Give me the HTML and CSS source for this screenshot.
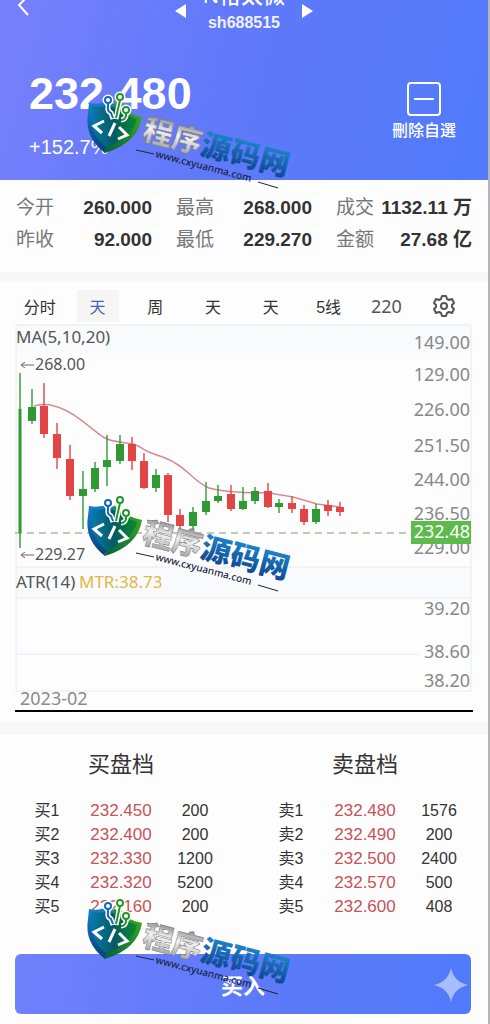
FILE: index.html
```
<!DOCTYPE html>
<html lang="zh-CN">

<head>
  <meta charset="UTF-8">
  <meta name="viewport" content="width=device-width, initial-scale=1.0">
  <title>N裕太微 sh688515</title>
  <link rel="stylesheet" href="styles.css">
</head>

<body>
  <div class="app">
    <header class="header">
      <div class="nav">
        <button class="icon-btn" aria-label="返回">
          <svg width="14" height="24" viewBox="0 0 14 24" fill="none" stroke="#fff" stroke-width="2"><path d="M11 2L2 11l9 10" /></svg>
        </button>
        <div class="stock">
          <button class="icon-btn" aria-label="上一个">
            <svg width="12" height="14" viewBox="0 0 12 14" fill="#fff"><path d="M11 0v14L0 7z" /></svg>
          </button>
          <div class="stock-title">
            <h1>N裕太微</h1>
            <p>sh688515</p>
          </div>
          <button class="icon-btn" aria-label="下一个">
            <svg width="12" height="14" viewBox="0 0 12 14" fill="#fff"><path d="M1 0v14l11-7z" /></svg>
          </button>
        </div>
      </div>

      <div class="quote">
        <div>
          <div class="price">232.480</div>
          <div class="change">+152.7%</div>
        </div>
        <button class="favorite">
          <svg width="36" height="36" viewBox="0 0 36 36" fill="none" stroke="#fff" stroke-width="2"><rect x="2" y="2" width="32" height="32" rx="3" /><path d="M8 18h20" /></svg>
          刪除自選
        </button>
      </div>
    </header>

    <dl class="stats">
      <div><dt>今开</dt><dd>260.000</dd></div>
      <div><dt>最高</dt><dd>268.000</dd></div>
      <div><dt>成交</dt><dd>1132.11 万</dd></div>
      <div><dt>昨收</dt><dd>92.000</dd></div>
      <div><dt>最低</dt><dd>229.270</dd></div>
      <div><dt>金额</dt><dd>27.68 亿</dd></div>
    </dl>

    <section class="chart">
      <div class="tabs">
        <button>分时</button>
        <button class="active">天</button>
        <button>周</button>
        <button>天</button>
        <button>天</button>
        <button>5线</button>
        <button class="num">220</button>
        <button aria-label="设置">
          <svg width="22" height="22" viewBox="0 0 22 22" fill="none" stroke="#555" stroke-width="2" stroke-linejoin="round"><path d="M9 1h4l1 3 2 1 3-1 2 4-2 2v2l2 2-2 4-3-1-2 1-1 3H9l-1-3-2-1-3 1-2-4 2-2v-2L1 8l2-4 3 1 2-1z" /><circle cx="11" cy="11" r="3" /></svg>
        </button>
      </div>

      <svg class="kline" viewBox="0 0 458 392">
        <rect class="band" x="1" y="3" width="455" height="28" />
        <rect class="band" x="1" y="245" width="455" height="31" />
        <path class="grid" d="M1 369V3h455v366zM1 245h455M1 276h455M1 332h403" />
        <path class="last-line" d="M0 211h397" />
        <path class="ma" d="M19 84C27 82 33 82 39 84C57 88 75 106 88 115C98 121 110 120 118 122C126 124 128 128 134 130C145 135 151 135 160 141C173 148 181 161 194 166C208 170 224 170 238 171C248 171 254 170 260 172L278 175L302 182L325 185" />
        <g id="candles"></g>

        <text class="label" x="1" y="21">MA(5,10,20)</text>
        <path class="arrow" d="M19 43H6M10 40l-4 3 4 3M19 233H6M10 230l-4 3 4 3" />
        <text class="mark" x="20" y="48">268.00</text>
        <text class="mark" x="20" y="238">229.27</text>

        <g class="axis">
          <text x="455" y="27">149.00</text>
          <text x="455" y="59">129.00</text>
          <text x="455" y="94">226.00</text>
          <text x="455" y="130">251.50</text>
          <text x="455" y="164">244.00</text>
          <text x="455" y="198">236.50</text>
          <text x="455" y="232">229.00</text>
          <rect x="396" y="199" width="60" height="23" />
          <text class="last" x="455" y="216">232.48</text>
          <text x="455" y="293">39.20</text>
          <text x="455" y="336">38.60</text>
          <text x="455" y="365">38.20</text>
        </g>

        <text class="label" x="1" y="266">ATR(14)</text>
        <text class="label mtr" x="64" y="266">MTR:38.73</text>
        <text class="date" x="5" y="383">2023-02</text>
        <rect x="0" y="388" width="458" height="2" />
      </svg>
    </section>

    <section class="book">
      <div>
        <h2>买盘档</h2>
        <table>
          <tr><th>买1</th><td class="red">232.450</td><td>200</td></tr>
          <tr><th>买2</th><td class="red">232.400</td><td>200</td></tr>
          <tr><th>买3</th><td class="red">232.330</td><td>1200</td></tr>
          <tr><th>买4</th><td class="red">232.320</td><td>5200</td></tr>
          <tr><th>买5</th><td class="red">232.160</td><td>200</td></tr>
        </table>
      </div>
      <div>
        <h2>卖盘档</h2>
        <table>
          <tr><th>卖1</th><td class="red">232.480</td><td>1576</td></tr>
          <tr><th>卖2</th><td class="red">232.490</td><td>200</td></tr>
          <tr><th>卖3</th><td class="red">232.500</td><td>2400</td></tr>
          <tr><th>卖4</th><td class="red">232.570</td><td>500</td></tr>
          <tr><th>卖5</th><td class="red">232.600</td><td>408</td></tr>
        </table>
      </div>
    </section>

    <div class="footer">
      <button class="buy">买入</button>
      <svg class="sparkle" width="34" height="34" viewBox="0 0 34 34"><path d="M17 0Q20 14 34 17Q20 20 17 34Q14 20 0 17Q14 14 17 0z" /></svg>
    </div>

    <svg class="watermark first" viewBox="0 0 220 110">
      <defs>
        <linearGradient id="silver" x1="0" y1="0" x2="0" y2="1">
          <stop offset=".2" stop-color="#8a8a8a" />
          <stop offset=".5" stop-color="#f4f4f4" />
          <stop offset="1" stop-color="#888" />
        </linearGradient>
        <linearGradient id="blue" x1="0" y1="0" x2="0" y2="1">
          <stop offset=".2" stop-color="#1d86cb" />
          <stop offset="1" stop-color="#0b3a86" />
        </linearGradient>
        <linearGradient id="shieldBlue" x1="0" y1="0" x2="0" y2="1">
          <stop offset="0" stop-color="#1583d0" />
          <stop offset="1" stop-color="#073f78" />
        </linearGradient>
        <linearGradient id="shieldGreen" x1="1" y1="0" x2="0" y2="1">
          <stop offset="0" stop-color="#42b01e" />
          <stop offset="1" stop-color="#05603f" />
        </linearGradient>
        <linearGradient id="inner" x1="0" y1="0" x2="1" y2="0">
          <stop offset="0" stop-color="#0879ae" />
          <stop offset=".5" stop-color="#045a63" />
          <stop offset="1" stop-color="#0b8c2c" />
        </linearGradient>
        <symbol id="logo" viewBox="0 0 220 110">
          <path fill="url(#shieldBlue)" d="M9 18Q20 20 28 16L36 20L25 68Q4 52 8 28z" />
          <path fill="url(#shieldGreen)" d="M34 17Q46 29 62 32Q58 58 25 68z" />
          <path fill="url(#inner)" d="M12 21Q21 23 28 20L40 25Q47 31 57 34Q52 54 26 62Q8 48 12 21z" />
          <g fill="#fff" stroke="#fff" stroke-width="5">
            <path fill="none" d="M28 17v5q-1 4 3 6l2 6M40 15l-4 19M46 27v4q-1 4-5 4" />
            <circle cx="28" cy="15" r="3" />
            <circle cx="40" cy="12" r="3" />
            <circle cx="46" cy="25" r="3" />
          </g>
          <g fill="#fff" stroke="#23962a" stroke-width="2">
            <path fill="none" stroke="#1468b5" d="M28 17v5q-1 4 3 6l2 5" />
            <path fill="none" d="M40 15l-4 18M46 27v4q-1 4-5 4" />
            <circle cx="28" cy="15" r="3" stroke="#1468b5" />
            <circle cx="40" cy="12" r="3" />
            <circle cx="46" cy="25" r="3" />
          </g>
          <path fill="none" stroke="#fff" stroke-width="3" d="M24 36l-10 5 8 7M35 38l-6 13M39 42l8 8-9 4" />
          <g transform="translate(61 54) rotate(14.5)">
            <text class="wm-name silver" x="0" y="0">程序</text>
            <text class="wm-name blue" x="60" y="0">源码网</text>
            <text class="wm-url" x="18" y="14">www.cxyuanma.com</text>
          </g>
          <path fill="none" stroke="#223" stroke-width="1" d="M56 65l18 4M178 97l20 6" />
        </symbol>
      </defs>
      <use href="#logo" />
    </svg>
    <svg class="watermark second" viewBox="0 0 220 110"><use href="#logo" /></svg>
    <svg class="watermark third" viewBox="0 0 220 110"><use href="#logo" /></svg>
  </div>

  <script>
    // x, high, body top, body bottom, low, direction
    const candles = [
      [5, 51, 87, 211, 226, 'up'],
      [17, 67, 85, 99, 102, 'up'],
      [29, 61, 84, 112, 116, 'down'],
      [42, 101, 112, 136, 147, 'down'],
      [55, 123, 137, 174, 178, 'down'],
      [68, 149, 167, 174, 207, 'up'],
      [80, 140, 146, 167, 170, 'up'],
      [92, 113, 138, 145, 164, 'up'],
      [105, 113, 122, 139, 142, 'up'],
      [117, 115, 122, 139, 148, 'down'],
      [129, 131, 139, 166, 167, 'down'],
      [141, 147, 153, 166, 170, 'up'],
      [153, 151, 153, 193, 200, 'down'],
      [165, 187, 193, 204, 210, 'down'],
      [178, 185, 190, 204, 207, 'up'],
      [191, 160, 179, 190, 193, 'up'],
      [203, 163, 174, 179, 181, 'up'],
      [216, 163, 172, 187, 189, 'down'],
      [228, 165, 179, 187, 188, 'up'],
      [240, 165, 169, 179, 182, 'up'],
      [253, 161, 169, 185, 186, 'down'],
      [264, 177, 181, 185, 191, 'up'],
      [277, 174, 181, 187, 191, 'down'],
      [289, 183, 187, 200, 203, 'down'],
      [301, 182, 187, 200, 202, 'up'],
      [313, 178, 183, 189, 194, 'down'],
      [325, 180, 185, 190, 194, 'down']
    ];

    document.getElementById('candles').innerHTML = candles.map(([x, high, top, bottom, low, dir], i) => {
      const w = i === 0 ? 3 : 8;
      return `<g class="${dir}"><rect class="wick" x="${x - 1}" y="${high}" width="2" height="${low - high}" />` +
        `<rect x="${x - w / 2}" y="${top}" width="${w}" height="${bottom - top}" /></g>`;
    }).join('');
  </script>
</body>

</html>
```
FILE: styles.css
```
body {
  margin: 0;
  background-color: #fdfdfd;
  font-family: "Liberation Sans", "Noto Sans CJK SC", sans-serif;
  color: #333;
}

.app {
  position: relative;
  overflow: hidden;
  min-height: 100vh;
  box-sizing: border-box;
  border-right: 2px solid #b4b4b8;
}

h1,
h2,
p,
dl,
dd {
  margin: 0;
}

button {
  padding: 0;
  border: none;
  background: none;
  font-family: inherit;
  color: inherit;
  cursor: pointer;
}

.header {
  height: 180px;
  overflow: hidden;
  background: linear-gradient(105deg, #7880fb, #6079fa 45%, #507bfb);
  color: #fff;
}

.nav {
  display: grid;
  grid-template-columns: 1fr auto 1fr;
  padding: 0 17px;
}

.icon-btn {
  display: flex;
  align-items: center;
  height: 22px;
}

.nav > .icon-btn {
  height: 12px;
}

.stock {
  display: flex;
  gap: 16px;
}

.stock-title {
  margin-top: -20px;
  text-align: center;
}

.stock-title h1 {
  font-size: 22px;
  line-height: 32px;
  font-weight: 500;
}

.stock-title p {
  font-size: 16px;
  line-height: 22px;
  font-weight: bold;
  opacity: 0.9;
}

.quote {
  display: flex;
  justify-content: space-between;
  padding: 34px 32px 0 29px;
}

.price {
  font-size: 45px;
  line-height: 52px;
  font-weight: bold;
}

.change {
  margin-top: 15px;
  font-size: 20px;
  line-height: 24px;
}

.favorite {
  display: flex;
  flex-direction: column;
  align-items: center;
  align-self: flex-start;
  margin-top: 13px;
  font-family: "Noto Sans CJK TC", sans-serif;
  font-size: 16px;
  line-height: 24px;
  font-weight: 500;
}

.stats {
  display: grid;
  grid-template-columns: repeat(3, 1fr);
  column-gap: 24px;
  padding: 12px 16px 16px;
  border-bottom: 10px solid #f7f7f7;
}

.stats div {
  display: flex;
  justify-content: space-between;
  line-height: 32px;
  font-size: 19px;
  white-space: nowrap;
}

.stats dt {
  color: #777;
}

.stats dd {
  font-weight: bold;
}

.chart {
  padding: 0 15px 8px;
  border-bottom: 13px solid #f7f7f7;
}

.tabs {
  display: grid;
  grid-template-columns: repeat(8, 1fr);
  height: 40px;
  margin-left: -4px;
  padding-top: 8px;
  box-sizing: border-box;
}

.tabs button {
  display: flex;
  align-items: center;
  justify-content: center;
  margin: 0 8px;
  font-size: 16px;
  white-space: nowrap;
}

.tabs .active {
  background-color: #f6f5f4;
  color: #3d6cae;
}

.tabs .num {
  font-family: "Noto Sans", sans-serif;
  font-size: 18px;
  color: #555;
}

.kline {
  display: block;
  width: 100%;
  font-family: "Noto Sans", sans-serif;
}

.kline .band {
  fill: #f8fafc;
}

.kline .grid {
  fill: none;
  stroke: #e6ecf0;
}

.kline .last-line {
  stroke: #7d9c80;
  stroke-dasharray: 7 5;
}

.kline .ma {
  fill: none;
  stroke: #d98a90;
  stroke-width: 1.5;
}

.kline .up {
  fill: #2f9a33;
}

.kline .down {
  fill: #e24545;
}

.kline .wick {
  opacity: 0.7;
}

.kline .arrow {
  fill: none;
  stroke: #666;
}

.kline .label {
  font-size: 17px;
  fill: #555;
}

.kline .mtr {
  fill: #e0b847;
}

.kline .mark {
  font-size: 16px;
  fill: #555;
}

.kline .date {
  font-size: 18px;
  fill: #8a8a8a;
}

.kline .axis {
  font-size: 18px;
  text-anchor: end;
  fill: #888;
}

.kline .axis rect {
  fill: #5dbb4c;
}

.kline .axis .last {
  fill: #fff;
}

.book {
  display: grid;
  grid-template-columns: 1fr 1fr;
  padding: 14px 0 35px;
}

.book h2 {
  font-size: 22px;
  line-height: 32px;
  font-weight: normal;
  text-align: center;
}

.book > div {
  padding: 0 12px 0 10px;
}

.book table {
  width: 100%;
  margin-top: 18px;
  table-layout: fixed;
  border-collapse: collapse;
}

.book th,
.book td {
  height: 24px;
  padding: 0;
  font-size: 16px;
  line-height: 24px;
  font-weight: normal;
  text-align: center;
}

.book .red {
  font-size: 17px;
  color: #c65358;
}

.footer {
  position: relative;
  padding: 0 17px 10px 15px;
}

.buy {
  width: 100%;
  height: 60px;
  border-radius: 6px;
  background: linear-gradient(100deg, #7180fb, #5e7afa 50%, #507bfb);
  color: #fff;
  font-size: 22px;
  font-weight: bold;
}

.sparkle {
  position: absolute;
  right: 20px;
  top: 14px;
  fill: #a9bdfc;
}

.watermark {
  position: absolute;
  left: 80px;
  width: 220px;
  height: 110px;
  pointer-events: none;
}

.first {
  top: 85px;
}

.second {
  top: 488px;
}

.third {
  top: 891px;
}

.wm-name {
  font-family: "Noto Sans CJK SC", sans-serif;
  font-size: 30px;
  font-weight: 900;
}

.silver {
  fill: url(#silver);
  stroke: #777;
  stroke-width: 0.5;
}

.blue {
  fill: url(#blue);
}

.wm-url {
  font-family: "Noto Sans", sans-serif;
  font-size: 10px;
  font-weight: 500;
  fill: #16243c;
}
```
